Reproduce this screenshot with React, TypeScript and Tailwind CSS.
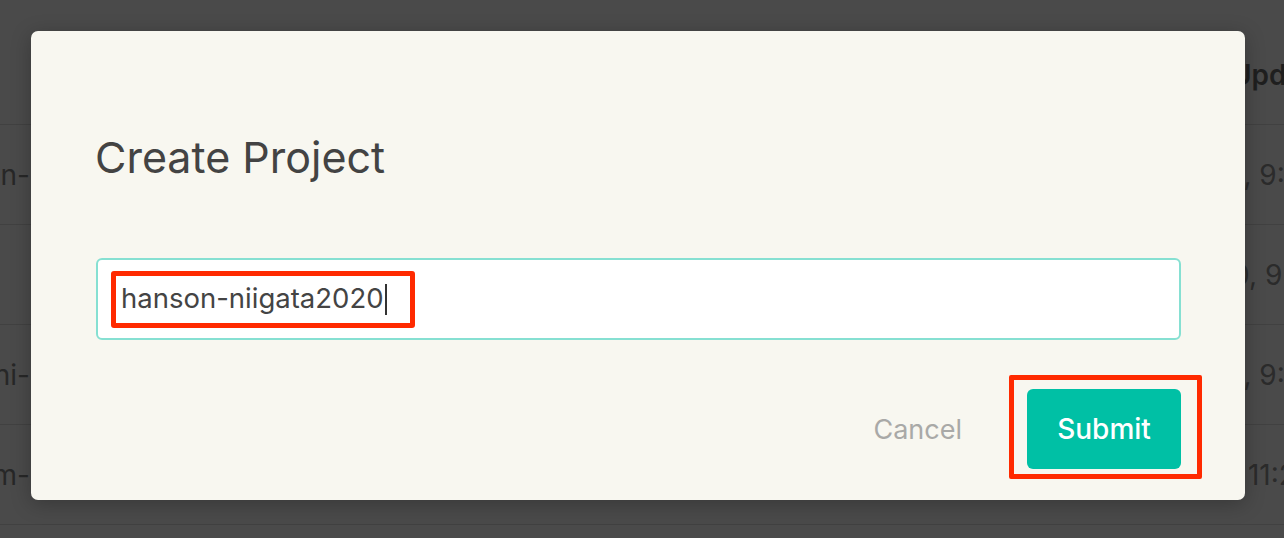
import React from "react";

const rows = [
  { left: "hanson-", right: "1, 9:41 AM" },
  { left: "", right: "0, 9:12 AM" },
  { left: "tomoyoshi-", right: "1, 9:03 AM" },
  { left: "team-", right: ", 11:20 AM" },
];

export default function App() {
  return (
    <div
      className="relative w-[1284px] h-[538px] overflow-hidden bg-[#4a4a4a]"
      style={{ fontFamily: "Inter, 'Noto Sans', sans-serif" }}
    >
      {/* background table (dimmed) */}
      <div className="flex flex-col">
        <div className="h-[125px] flex items-center justify-between pt-[25px] border-b border-[#414141]">
          <div className="w-[31px]" />
          <div className="w-[53px] overflow-hidden whitespace-nowrap text-[28px] font-semibold text-[#1f1f1f]">
            Updated
          </div>
        </div>
        {rows.map((r, i) => (
          <div
            key={i}
            className="h-[100px] flex items-center justify-between border-b border-[#414141]"
          >
            <div className="w-[31px] overflow-hidden flex justify-end whitespace-nowrap text-[28px] text-[#272727] pr-[1px]">
              {r.left}
            </div>
            <div className="w-[52px] overflow-hidden whitespace-nowrap text-[28px] text-[#2b2b2b]">
              {r.right}
            </div>
          </div>
        ))}
      </div>

      {/* modal */}
      <div className="absolute left-[31px] top-[31px] w-[1214px] h-[469px] rounded-[7px] bg-[#f8f7f0] shadow-[0_4px_20px_rgba(0,0,0,0.25)] flex flex-col pt-[105px] pl-[65px] pr-[64px] pb-[31px]">
        <h2 className="text-[43px] leading-none text-[#434343] font-normal h-[42px] -ml-[1px]">
          Create Project
        </h2>

        <div className="mt-[80px] h-[82px] rounded-[6px] border-2 border-[#86e0d2] bg-white flex items-center pl-[13px]">
          <div className="h-[57px] border-[5px] border-[#ff2a00] rounded-[3px] flex items-center pl-[5px] pr-[23px]">
            <span className="text-[27.5px] text-[#444444] leading-none">hanson-niigata2020</span>
            <span className="w-[2px] h-[31px] bg-[#333333] ml-[1px]" />
          </div>
        </div>

        <div className="mt-auto flex items-center justify-end">
          <button className="text-[27px] text-[#a9a9a7] leading-none mr-[65px]">Cancel</button>
          <div className="relative">
            <div className="absolute -left-[18px] -right-[21px] -top-[14px] -bottom-[10px] border-[5px] border-[#ff2a00] rounded-[2px]" />
            <button className="w-[154px] h-[80px] rounded-[6px] bg-[#00c0a5] text-white text-[28px] font-medium leading-none">
              Submit
            </button>
          </div>
        </div>
      </div>
    </div>
  );
}
